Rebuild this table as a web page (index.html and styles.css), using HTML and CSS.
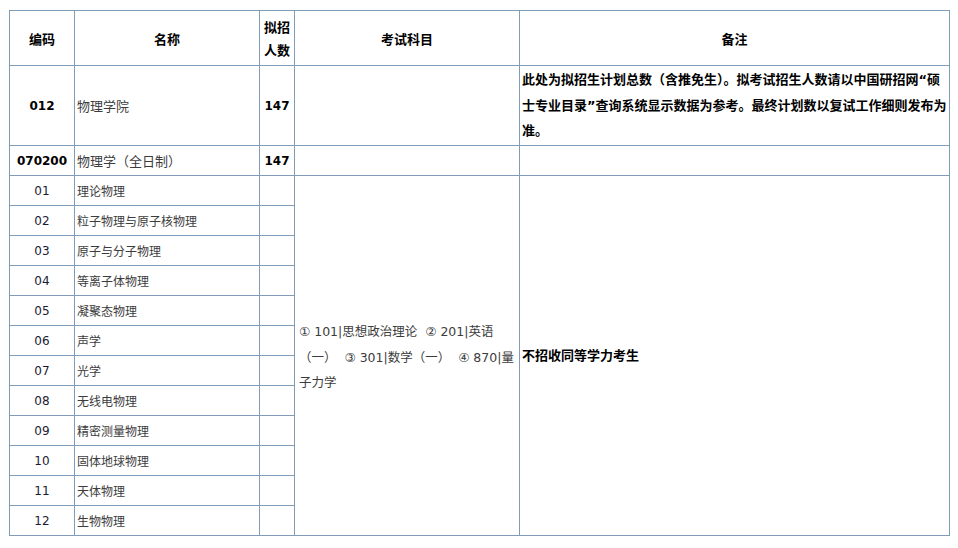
FILE: index.html
```html
<!DOCTYPE html>
<html lang="zh-CN">
<head>
<meta charset="utf-8">
<title>物理学院 招生目录</title>
<link rel="stylesheet" href="styles.css">
</head>
<body>
<table class="plan">
  <colgroup>
    <col class="c-code">
    <col class="c-name">
    <col class="c-num">
    <col class="c-exam">
    <col class="c-note">
  </colgroup>
  <thead>
    <tr class="head">
      <th>编码</th>
      <th>名称</th>
      <th class="num-head">拟招人数</th>
      <th>考试科目</th>
      <th>备注</th>
    </tr>
  </thead>
  <tbody>
    <tr class="school">
      <td class="code bold">012</td>
      <td class="name big">物理学院</td>
      <td class="count bold">147</td>
      <td></td>
      <td class="note">此处为拟招生计划总数（含推免生）。拟考试招生人数请以中国研招网“硕士专业目录”查询系统显示数据为参考。最终计划数以复试工作细则发布为准。</td>
    </tr>
    <tr class="row">
      <td class="code bold">070200</td>
      <td class="name big">物理学（全日制）</td>
      <td class="count bold">147</td>
      <td></td>
      <td></td>
    </tr>
    <tr class="row">
      <td class="code">01</td>
      <td class="name">理论物理</td>
      <td></td>
      <td class="exam" rowspan="12">① 101|思想政治理论&nbsp; ② 201|英语（一）&nbsp; ③ 301|数学（一）&nbsp; ④ 870|量子力学</td>
      <td class="note" rowspan="12">不招收同等学力考生</td>
    </tr>
    <tr class="row"><td class="code">02</td><td class="name">粒子物理与原子核物理</td><td></td></tr>
    <tr class="row"><td class="code">03</td><td class="name">原子与分子物理</td><td></td></tr>
    <tr class="row"><td class="code">04</td><td class="name">等离子体物理</td><td></td></tr>
    <tr class="row"><td class="code">05</td><td class="name">凝聚态物理</td><td></td></tr>
    <tr class="row"><td class="code">06</td><td class="name">声学</td><td></td></tr>
    <tr class="row"><td class="code">07</td><td class="name">光学</td><td></td></tr>
    <tr class="row"><td class="code">08</td><td class="name">无线电物理</td><td></td></tr>
    <tr class="row"><td class="code">09</td><td class="name">精密测量物理</td><td></td></tr>
    <tr class="row"><td class="code">10</td><td class="name">固体地球物理</td><td></td></tr>
    <tr class="row"><td class="code">11</td><td class="name">天体物理</td><td></td></tr>
    <tr class="row"><td class="code">12</td><td class="name">生物物理</td><td></td></tr>
  </tbody>
</table>
</body>
</html>
```
FILE: styles.css
```css
html, body {
  margin: 0;
  padding: 0;
  background: #ffffff;
}

body {
  font-family: "DejaVu Sans", "Noto Sans CJK SC", sans-serif;
  font-size: 12px;
  color: #333333;
}

.plan {
  border-collapse: collapse;
  table-layout: fixed;
  width: 940px;
  margin: 10px 0 0 9px;
}

.c-code { width: 65px; }
.c-name { width: 185px; }
.c-num  { width: 35px; }
.c-exam { width: 225px; }
.c-note { width: 430px; }

.plan th,
.plan td {
  border: 1px solid #7f9db9;
  padding: 0 2px;
  vertical-align: middle;
}

.head th {
  height: 54px;
  font-family: "Noto Sans CJK SC", sans-serif;
  font-size: 13px;
  font-weight: bold;
  color: #000000;
  line-height: 23px;
  text-align: center;
}

.school td {
  height: 79px;
}

.row td {
  height: 29px;
}

.code {
  text-align: center;
  color: #1a1a33;
}

.bold {
  font-weight: bold;
  color: #000000;
}

.count {
  text-align: center;
}

.name {
  font-family: "Noto Sans CJK SC", sans-serif;
  color: #3c3c3c;
}

.name.big {
  font-size: 13px;
}

.note {
  font-family: "DejaVu Sans", "Noto Sans CJK SC", sans-serif;
  font-size: 13px;
  font-weight: bold;
  color: #000000;
  line-height: 25.5px;
}

.plan .exam {
  color: #3c3c3c;
  font-size: 12.5px;
  line-height: 25.5px;
  padding: 4px 2px 0 4px;
}
```
